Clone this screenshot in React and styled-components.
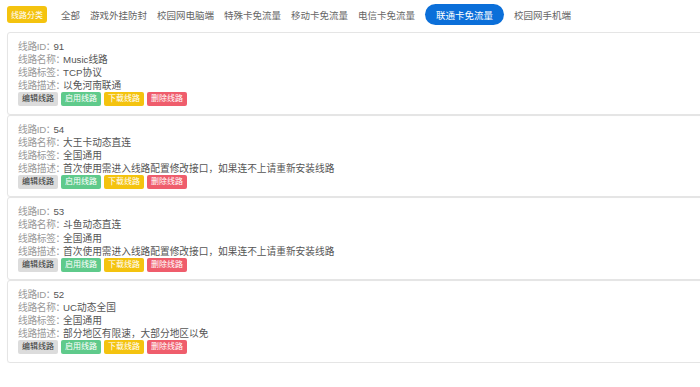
import React, { useState } from "react";
import styled, { createGlobalStyle } from "styled-components";

const GlobalStyle = createGlobalStyle`
  html, body {
    margin: 0;
    padding: 0;
    background: #fff;
    overflow: hidden;
  }
  body {
    font-family: "Liberation Sans", "Noto Sans CJK SC", sans-serif;
  }
`;

const Page = styled.div`
  padding: 4px 0 0 7px;
  width: 720px;
`;

const Nav = styled.nav`
  display: flex;
  align-items: center;
  gap: 10px;
  height: 21px;
  margin-bottom: 7px;
`;

const Badge = styled.span`
  display: inline-flex;
  align-items: center;
  height: 17px;
  padding: 0 4px;
  margin-right: 4px;
  border-radius: 3px;
  background: #f4c30f;
  color: #fff;
  font-size: 8px;
`;

const NavItem = styled.span`
  display: inline-flex;
  align-items: center;
  height: 21px;
  padding: ${(p) => (p.$active ? "0 11px" : "0")};
  border-radius: 11px;
  font-size: 9.5px;
  color: ${(p) => (p.$active ? "#fff" : "#666")};
  background: ${(p) => (p.$active ? "#0b6fd9" : "transparent")};
  cursor: pointer;
  white-space: nowrap;
`;

const List = styled.div`
  display: flex;
  flex-direction: column;
`;

const Card = styled.div`
  border: 1px solid #e5e5e5;
  border-radius: 3px;
  padding: 7px 11px 7.3px 10px;
  box-shadow: 0 1px 1px rgba(0, 0, 0, 0.04);
`;

const Line = styled.div`
  font-size: 9.7px;
  line-height: 13.1px;
  color: #555;
  white-space: nowrap;
`;

const Label = styled.span`
  color: #999;
  letter-spacing: -0.3px;
  font-feature-settings: "halt";
  margin-right: 3px;
`;

const Actions = styled.div`
  display: flex;
  gap: 3px;
`;

const tones = {
  edit: { bg: "#dcdcdc", fg: "#333" },
  enable: { bg: "#5fca8b", fg: "#fff" },
  download: { bg: "#f4c30f", fg: "#fff" },
  remove: { bg: "#ef5d6c", fg: "#fff" },
};

const ActionButton = styled.button`
  height: 14px;
  width: 40px;
  padding: 0;
  border: none;
  border-radius: 2px;
  font-family: inherit;
  font-size: 8px;
  line-height: 14px;
  background: ${(p) => tones[p.$tone].bg};
  color: ${(p) => tones[p.$tone].fg};
  cursor: pointer;
`;

const categories = [
  "全部",
  "游戏外挂防封",
  "校园网电脑端",
  "特殊卡免流量",
  "移动卡免流量",
  "电信卡免流量",
  "联通卡免流量",
  "校园网手机端",
];

const routes = [
  { id: 91, name: "Music线路", tag: "TCP协议", desc: "以免河南联通" },
  {
    id: 54,
    name: "大王卡动态直连",
    tag: "全国通用",
    desc: "首次使用需进入线路配置修改接口，如果连不上请重新安装线路",
  },
  {
    id: 53,
    name: "斗鱼动态直连",
    tag: "全国通用",
    desc: "首次使用需进入线路配置修改接口，如果连不上请重新安装线路",
  },
  { id: 52, name: "UC动态全国", tag: "全国通用", desc: "部分地区有限速，大部分地区以免" },
];

const App = () => {
  const [active, setActive] = useState("联通卡免流量");

  return (
    <Page>
      <GlobalStyle />
      <Nav>
        <Badge>线路分类</Badge>
        {categories.map((c) => (
          <NavItem key={c} $active={c === active} onClick={() => setActive(c)}>
            {c}
          </NavItem>
        ))}
      </Nav>
      <List>
        {routes.map((r) => (
          <Card key={r.id}>
            <Line>
              <Label>线路ID：</Label>
              {r.id}
            </Line>
            <Line>
              <Label>线路名称：</Label>
              {r.name}
            </Line>
            <Line>
              <Label>线路标签：</Label>
              {r.tag}
            </Line>
            <Line>
              <Label>线路描述：</Label>
              {r.desc}
            </Line>
            <Actions>
              <ActionButton $tone="edit">编辑线路</ActionButton>
              <ActionButton $tone="enable">启用线路</ActionButton>
              <ActionButton $tone="download">下载线路</ActionButton>
              <ActionButton $tone="remove">删除线路</ActionButton>
            </Actions>
          </Card>
        ))}
      </List>
    </Page>
  );
};

export default App;
